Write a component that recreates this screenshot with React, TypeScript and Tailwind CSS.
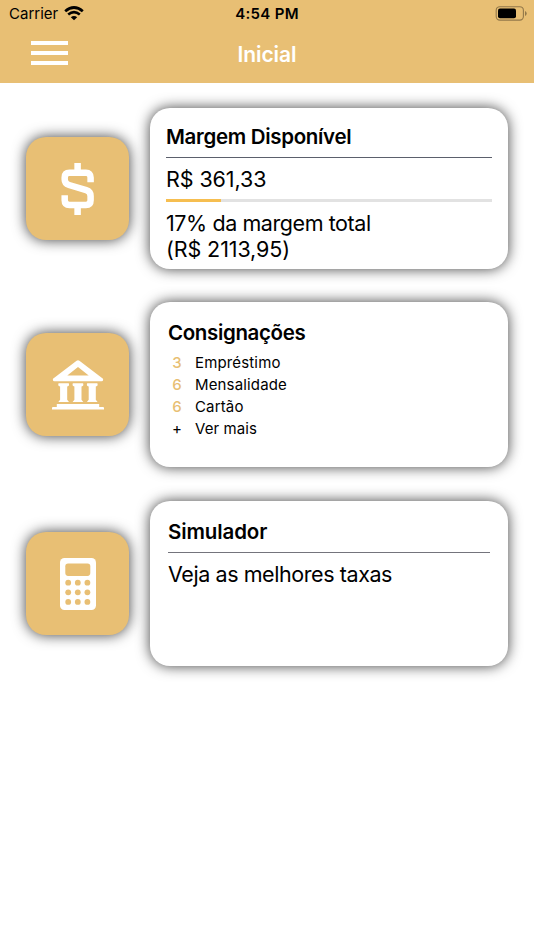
import type { ReactNode } from "react";

const items = [
  { qtd: "3", label: "Empréstimo" },
  { qtd: "6", label: "Mensalidade" },
  { qtd: "6", label: "Cartão" },
];

function DollarIcon() {
  return (
    <svg
      width="34"
      height="52"
      viewBox="0 0 34 52"
      fill="none"
      stroke="white"
      strokeWidth="6.5"
    >
      <path d="M16.6 0V8M16.6 44V52" />
      <path d="M29.6 19.3V14.5Q29.6 9.8 25 9.8H8.5Q3.7 9.8 3.7 14.5V16.5Q3.7 20.6 8 22L25.2 27.2Q29.6 28.6 29.6 33V37.3Q29.6 42 25 42H8.5Q3.7 42 3.7 37.3V32.3" />
    </svg>
  );
}

function BankIcon() {
  return (
    <svg width="52" height="50" viewBox="0 0 52 50" fill="white">
      <path
        fillRule="evenodd"
        d="M24.6 .8Q26 -.2 27.4 .8L51 18.7Q51.6 21.3 49.5 21.3H2.5Q.4 21.3 1 18.7ZM26 7L15.3 15.6H36.7Z"
      />
      {[6.3, 20.6, 34.9].map((x) => (
        <path
          key={x}
          transform={`translate(${x} 23.2)`}
          d="M.6 0H10.1Q10.7 0 10.7 .6V2Q10.5 3 8.9 3.2V16.6L10.7 18.9H0L1.8 16.6V3.2Q.2 3 0 2V.6Q0 0 .6 0Z"
        />
      ))}
      <path d="M4.8 44h42.4v3H51q1 0 1 1v1.4H0V48q0-1 1-1H4.8Z" />
    </svg>
  );
}

function CalculatorIcon() {
  const cols = [8.2, 17.8, 27.4];
  const rows = [24.7, 34.3, 43.9];
  return (
    <svg width="36" height="52" viewBox="0 0 36 52">
      <rect width="36" height="52" rx="4.5" fill="white" />
      <rect x="5.3" y="5.5" width="25" height="12.4" rx="2.8" fill="#e8bf74" />
      {rows.map((y) =>
        cols.map((x) => (
          <circle key={`${x}-${y}`} cx={x} cy={y} r="2.9" fill="#e8bf74" />
        ))
      )}
    </svg>
  );
}

function Tile({ children }: { children: ReactNode }) {
  return (
    <div className="flex h-[103px] w-[103px] shrink-0 items-center justify-center rounded-[20px] bg-[#e8bf74] shadow-[0_0_14px_rgba(0,0,0,0.75)]">
      {children}
    </div>
  );
}

function Card({
  className,
  children,
}: {
  className: string;
  children: ReactNode;
}) {
  return (
    <div
      className={`w-[358px] shrink-0 rounded-[20px] bg-white shadow-[0_0_14px_rgba(0,0,0,0.75)] ${className}`}
    >
      {children}
    </div>
  );
}

export default function App() {
  return (
    <div className="h-[950px] w-[534px] overflow-hidden bg-white font-['Inter',sans-serif] text-black">
      <header className="h-[83px] bg-[#e8bf74]">
        <div className="grid h-[26px] grid-cols-3 items-center pr-[7px] pl-[9px]">
          <div className="flex items-center gap-[6px]">
            <span className="pt-px text-[15px] leading-none">Carrier</span>
            <svg width="20" height="15" viewBox="0 0 20 15" fill="none" stroke="black">
              <path d="M1.2 5.2Q10 -2.2 18.8 5.2" strokeWidth="2.8" />
              <path d="M4.2 8.6Q10 3.8 15.8 8.6" strokeWidth="2.6" />
              <path d="M10 14.3L6.8 11.2Q10 8.8 13.2 11.2Z" fill="black" stroke="none" />
            </svg>
          </div>
          <span className="pt-px pr-[2px] text-center text-[15px] leading-none font-semibold tracking-[0.3px]">
            4:54 PM
          </span>
          <div className="flex justify-end">
            <svg width="32" height="15" viewBox="0 0 32 15">
              <rect x="1.2" y=".7" width="27.2" height="13.4" rx="3.6" fill="none" stroke="#927849" strokeWidth="1.1" />
              <rect x="3" y="2.5" width="18" height="9.8" rx="2" />
              <path d="M30 5V10Q31.7 9.3 31.7 7.5T30 5Z" fill="#927849" />
            </svg>
          </div>
        </div>
        <div className="grid grid-cols-3 items-start px-[31px] pt-[15px]">
          <div className="flex w-[37px] flex-col gap-[6px]">
            <span className="h-[4px] bg-white" />
            <span className="h-[4px] bg-white" />
            <span className="h-[4px] bg-white" />
          </div>
          <h1 className="pt-[2px] text-center text-[21px] leading-6 font-semibold tracking-[-0.1px] text-white">
            Inicial
          </h1>
        </div>
      </header>

      <main className="flex flex-col pt-[25px] pl-[26px]">
        <section className="flex items-center gap-[21px]">
          <Tile>
            <DollarIcon />
          </Tile>
          <Card className="h-[161px] px-4 pt-4">
            <h2 className="text-[20.5px] leading-[26px] font-semibold tracking-[-0.32px]">
              Margem Disponível
            </h2>
            <div className="mt-[7px] h-px bg-[#5b606c]" />
            <p className="mt-[8px] text-[21.5px] leading-[26px] tracking-[-0.1px]">
              R$ 361,33
            </p>
            <div className="mt-[7px] h-[3px] bg-[#e2e2e2]">
              <div className="h-full w-[17%] bg-[#f6be50]" />
            </div>
            <p className="mt-[8px] text-[21.5px] leading-[26px] tracking-[-0.42px]">
              17% da margem total
            </p>
            <p className="text-[21.5px] leading-[26px] tracking-[-0.1px]">
              (R$ 2113,95)
            </p>
          </Card>
        </section>

        <section className="mt-[33px] flex items-center gap-[21px]">
          <Tile>
            <BankIcon />
          </Tile>
          <Card className="h-[165px] px-[18px] pt-[18px]">
            <h2 className="text-[20.5px] leading-[26px] font-semibold tracking-[-0.36px]">
              Consignações
            </h2>
            <ul className="mt-[6px] text-[15px] leading-[22px]">
              {items.map((item) => (
                <li key={item.label} className="flex">
                  <span className="w-[18px] text-center font-medium text-[#e8bf74]">
                    {item.qtd}
                  </span>
                  <span className="ml-[9px] tracking-[0.15px]">
                    {item.label}
                  </span>
                </li>
              ))}
              <li className="flex">
                <span className="w-[18px] text-center">+</span>
                <span className="ml-[9px] tracking-[0.1px]">Ver mais</span>
              </li>
            </ul>
          </Card>
        </section>

        <section className="mt-[34px] flex items-center gap-[21px]">
          <Tile>
            <CalculatorIcon />
          </Tile>
          <Card className="h-[165px] px-[18px] pt-[18px]">
            <h2 className="text-[20.5px] leading-[26px] font-semibold tracking-[-0.12px]">
              Simulador
            </h2>
            <div className="mt-[7px] h-px bg-[#74747c]" />
            <p className="mt-[8px] text-[21.5px] leading-[26px] tracking-[-0.42px]">
              Veja as melhores taxas
            </p>
          </Card>
        </section>
      </main>
    </div>
  );
}
